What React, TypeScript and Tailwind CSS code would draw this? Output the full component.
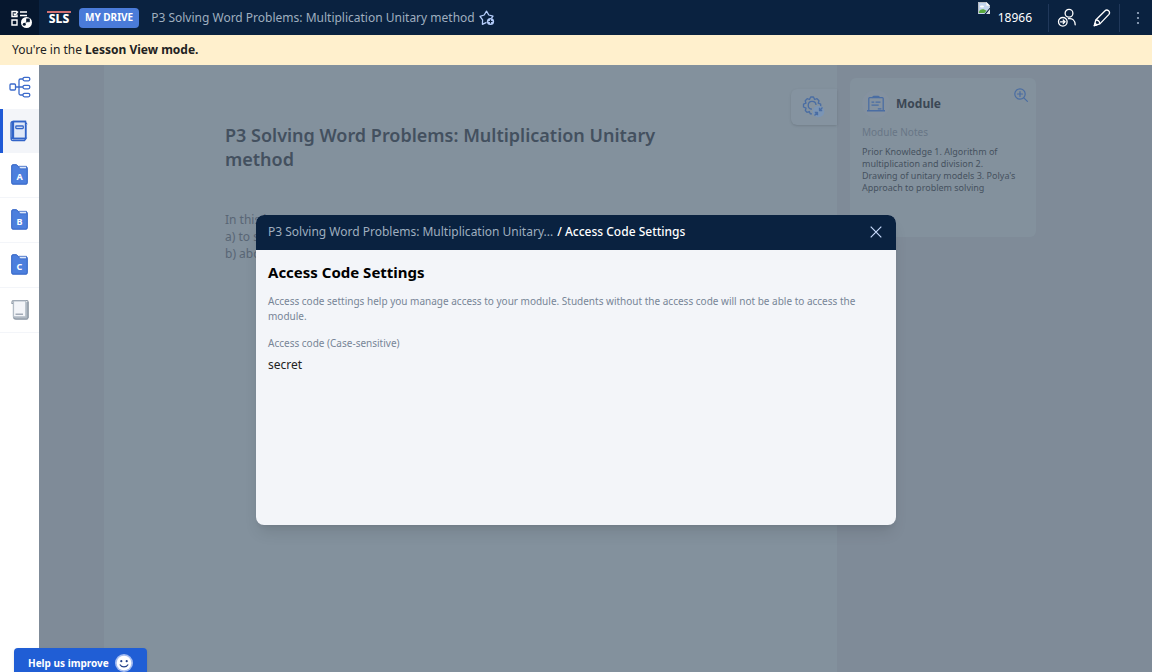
import React from "react";

function TaskIcon() {
  return (
    <svg width="22" height="20" viewBox="0 0 22 20" fill="none" stroke="#fff" strokeWidth="1.4">
      <path d="M6 1.5H1v5h5V4.5M2.7 3.6 4 5l3-3.5M9 2h7M9 5.500h7M1 10h5v5H1z" />
      <circle cx="15.500" cy="12.500" r="5.500" fill="#fff" stroke="none" />
      <circle cx="13.300" cy="14.300" r="1.500" fill="#06172e" stroke="none" />
      <path d="M15.500 8.800h3v3h-3zM14.200 13.300l2.500-2.300" fill="#06172e" stroke="#06172e" strokeWidth=".6" />
    </svg>
  );
}

function StarIcon() {
  return (
    <svg width="16" height="16" viewBox="0 0 16 16" fill="none" stroke="#b5cdfb" strokeWidth="1.3" strokeLinejoin="round">
      <path d="M7.500 12.300 3.400 14.300 3.600 9.800 1 6.300 5.200 5 7.500 1.200 9.800 5 14 6.200 12.500 8.200" />
      <circle cx="11.500" cy="11.500" r="3.600" fill="#b5cdfb" stroke="none" />
      <path d="M11.500 9.500v4M9.500 11.500h4" stroke="#0a2240" strokeWidth="1.200" />
    </svg>
  );
}

function BrokenImageIcon() {
  return (
    <svg width="12" height="12" viewBox="0 0 12 12">
      <path d="M0 0h8.500L12 3.500V5.500L6.500 12H0z" fill="#c3d5ee" />
      <path d="M.5 11.500V.5h8v3h3v2" fill="none" stroke="#b9bdc2" />
      <path d="M8.300.3v3.500h3.500z" fill="#fff" />
      <ellipse cx="4" cy="4.500" rx="2" ry="1" fill="#fff" />
      <path d="M1 11V9.500C2.500 6.500 6 6.500 8.500 8.800L6.500 11z" fill="#59a83e" />
      <path d="M12 7v5H8z" fill="#dfe4ea" />
    </svg>
  );
}

function UserSwitchIcon() {
  return (
    <svg width="20" height="20" viewBox="0 0 20 20" fill="none" stroke="#fff" strokeWidth="1.3" strokeLinecap="round">
      <circle cx="12" cy="5.300" r="3.900" />
      <path d="M11.500 10.700c4-.6 6.600 1.700 6.700 6.100" />
      <circle cx="5.800" cy="13.800" r="4.300" />
      <path d="M3.500 13.800h4.300M6.200 12l1.800 1.800-1.800 1.800" />
    </svg>
  );
}

function PencilIcon() {
  return (
    <svg width="18" height="18" viewBox="0 0 18 18" fill="none" stroke="#fff" strokeWidth="1.300" strokeLinejoin="round">
      <path d="M2.800 11 11.800 2c2.500-2.500 6.300.8 3.900 3.600L6.900 14.900 1.300 16.700z" />
      <path d="M2.800 11c2.300-.2 4 1.500 4.100 3.900M1.300 16.700l.8-2.500 1.700 1.700z" />
    </svg>
  );
}

function TreeIcon() {
  return (
    <svg width="22" height="22" viewBox="0 0 22 22" fill="none" stroke="#3c6bcb" strokeWidth="1.300">
      <rect x="1" y="8" width="5.500" height="6" rx="1" />
      <path d="M6.500 11H14M14 3h-2.500q-1.500 0-1.500 1.500v13q0 1.500 1.500 1.500H14" />
      <rect x="14" y="1.300" width="6.800" height="3.500" rx="1.500" />
      <rect x="14" y="9.300" width="6.800" height="3.500" rx="1.500" />
      <rect x="14" y="17.300" width="6.800" height="3.500" rx="1.500" />
    </svg>
  );
}

function BookIcon() {
  return (
    <svg width="18" height="22" viewBox="0 0 18 22" fill="none" stroke="#3264c8" strokeWidth="1.300">
      <path d="M3.500 1.500h12v17h-12z" fill="#e0e8f7" />
      <path d="M17 4.500 15.500 2.200V1.500H3Q1 1.500 1 3.500v14.800Q1 20.500 3 20.500h11.500l1.500-2H3.500Q1 18.500 1 17M16 5v13.500" />
      <path d="M2.500 2v16" strokeWidth="2" />
      <rect x="5.800" y="6" width="7.500" height="2.500" rx=".8" fill="#fff" />
    </svg>
  );
}

function FolderIcon({ letter }: { letter: string }) {
  return (
    <svg width="17" height="21" viewBox="0 0 17 21">
      <path d="M.7 2Q.7.7 2 .7h3.600L7.500 2.800H15q1.300 0 1.300 1.300v14.800q0 1.300-1.300 1.300H2Q.7 20.200.7 18.900z" fill="#4c7fdd" stroke="#3062c4" />
      <path d="M7.500 2.300h8v2.500H9z" fill="#dde8fb" stroke="#3062c4" strokeWidth=".7" />
      <text x="8.500" y="16" textAnchor="middle" fill="#fff" fontSize="9" fontWeight="700" fontFamily="Noto Sans, sans-serif">{letter}</text>
    </svg>
  );
}

function PageIcon() {
  return (
    <svg width="18" height="22" viewBox="0 0 18 22" fill="none" stroke="#8e99a6" strokeWidth="1.200">
      <path d="M2.500 4.500H1V3Q1 1.500 2.500 1.500h13.500q1 0 1 1v16.500" />
      <path d="M2.500 4.500v12.700q0 3 2.500 3h10.500q1.500 0 1.500-2V3" fill="#aeb7c1" />
      <path d="M2.500 2h12.300v15.800H2.500z" fill="#f3f5f9" stroke="#b4bdc7" />
      <path d="M4.500 15.200h7.500" />
    </svg>
  );
}

function GearIcon() {
  return (
    <svg width="24" height="24" viewBox="0 0 24 24" fill="none" stroke="#4a6da3" strokeWidth="1.300" strokeLinejoin="round">
      <path d="M10 18.800H8.200L7.300 16.500 5 17.300 3.300 15.500 4 13.200 1.500 12V9.200L4 8.200 3.200 5.700 5.200 3.700 7.500 4.500 8.700 2H11.500L12.600 4.500 15 3.700 17 5.700 16.200 8.200 18.700 9.200V11.500" />
      <path d="M10 14.200A3.900 3.900 0 1 1 14 10" />
      <circle cx="16.500" cy="16.500" r="5.800" fill="#7b95b5" stroke="none" />
      <path d="m20.500 12.500-3 3v-2.700m0 2.700h2.700m-7.700 5 3-3v2.700m0-2.700h-2.700" />
    </svg>
  );
}

function ModuleIcon() {
  return (
    <svg width="20" height="18" viewBox="0 0 22 20" fill="none" stroke="#4a6da3" strokeWidth="1.400">
      <path d="M6.500 3 8.500 1.500h5l2 1.500" />
      <path d="M3 17V4q0-1 1-1h14q1 0 1 1v13M1 17.500h20M6 8h3M10.500 8H16M6 11.200h8M13 15.500h4" />
    </svg>
  );
}

function ZoomIcon() {
  return (
    <svg width="14" height="14" viewBox="0 0 14 14" fill="none" stroke="#4a6da3" strokeWidth="1.200" strokeLinecap="round">
      <circle cx="6" cy="6" r="5.200" />
      <path d="m9.800 9.800 3.600 3.600M6 3.500v5M3.500 6h5" />
    </svg>
  );
}

function Smiley() {
  return (
    <svg width="18" height="18" viewBox="0 0 18 18">
      <circle cx="9" cy="9" r="9" fill="#a5bdf2" />
      <circle cx="9" cy="9" r="7.300" fill="#fff" />
      <circle cx="6.300" cy="7.200" r="1.100" fill="#24418a" />
      <circle cx="11.700" cy="7.200" r="1.100" fill="#24418a" />
      <path d="M4.800 10.500c1.800 3.200 6.600 3.200 8.400 0" fill="none" stroke="#24418a" strokeWidth="1.200" />
    </svg>
  );
}

function Header() {
  return (
    <header className="flex h-[35px] shrink-0 items-center bg-[#0a2240]">
      <button aria-label="Tasks" className="flex h-full w-[39px] items-center justify-center bg-[#06172e] pt-1 pl-1">
        <TaskIcon />
      </button>
      <a href="#" className="ml-2 flex w-6 flex-col items-center border-t-2 border-[#cf6f72] text-[12px] leading-[12px] font-extrabold text-white">
        SLS
      </a>
      <a href="#" className="ml-2 flex h-5 items-center rounded bg-[#4a7bd9] px-1.5 text-[10px] font-bold text-white">
        MY DRIVE
      </a>
      <span className="ml-3 text-[12px] whitespace-nowrap text-[#9faebf]">P3 Solving Word Problems: Multiplication Unitary method</span>
      <button aria-label="Add to favourites" className="ml-1">
        <StarIcon />
      </button>
      <div className="ml-auto flex h-full items-center">
        <span className="self-start pt-0.5">
          <BrokenImageIcon />
        </span>
        <span className="ml-2 text-[12px] text-white">18966</span>
        <div className="ml-4 flex h-7 items-center gap-4 border-x border-[#20385a] pr-2 pl-2">
          <button aria-label="Switch user">
            <UserSwitchIcon />
          </button>
          <button aria-label="Edit">
            <PencilIcon />
          </button>
        </div>
        <button aria-label="More" className="flex w-8 justify-center pl-1">
          <svg width="4" height="14" viewBox="0 0 4 14" fill="#9fb0c6">
            <circle cx="2" cy="2" r="1.100" />
            <circle cx="2" cy="7" r="1.100" />
            <circle cx="2" cy="12" r="1.100" />
          </svg>
        </button>
      </div>
    </header>
  );
}

function Sidebar() {
  return (
    <nav className="flex w-[39px] shrink-0 flex-col bg-white">
      <button aria-label="Structure" className="flex h-11 items-center justify-center">
        <TreeIcon />
      </button>
      <button aria-label="Module" className="flex h-11 items-center justify-center border-l-[3px] border-[#1f5ad6] bg-[#f3f5f9] pr-1">
        <BookIcon />
      </button>
      {["A", "B", "C"].map((letter) => (
        <button key={letter} aria-label={"Section " + letter} className="flex h-[45px] items-center justify-center border-b border-[#f3f5f9] pb-0.5">
          <FolderIcon letter={letter} />
        </button>
      ))}
      <button aria-label="Summary" className="flex h-[45px] items-center justify-center border-b border-[#f3f5f9]">
        <PageIcon />
      </button>
    </nav>
  );
}

function ModuleCard() {
  return (
    <section className="min-h-[159px] w-[186px] rounded-md bg-[#83919d] px-3 pt-2">
      <div className="flex items-start">
        <div className="flex items-center gap-1.5 pt-1">
          <span className="flex size-7 items-center justify-center rounded-full bg-[#8592a0]">
            <ModuleIcon />
          </span>
          <h2 className="text-[12px] leading-7 font-bold text-[#3b4754]">Module</h2>
        </div>
        <button aria-label="Zoom in" className="-mr-1 ml-auto pt-0.5">
          <ZoomIcon />
        </button>
      </div>
      <p className="mt-1 text-[10px] leading-5 text-[#687686]">Module Notes</p>
      <p className="mt-1 text-[9px] leading-3 text-[#46525f]">
        Prior Knowledge 1. Algorithm of multiplication and division 2.
        <br />
        Drawing of unitary models 3. Polya's Approach to problem solving
      </p>
    </section>
  );
}

function AccessCodeDialog() {
  return (
    <div role="dialog" aria-labelledby="dialog-title" className="min-h-[310px] w-full max-w-[640px] overflow-hidden rounded-lg bg-[#f3f5f9] shadow-lg">
      <div className="flex h-[35px] items-center bg-[#0a2240] px-3 text-[12px]">
        <span className="text-[#9faebf]">P3 Solving Word Problems: Multiplication Unitary...</span>
        <span className="ml-1 font-medium text-white">/ Access Code Settings</span>
        <button aria-label="Close" className="ml-auto px-0.5">
          <svg width="12" height="12" viewBox="0 0 12 12" stroke="#c6d9fa" strokeWidth="1.200">
            <path d="m.7.7 10.600 10.600M11.300.7.7 11.300" />
          </svg>
        </button>
      </div>
      <div className="px-3 pt-3">
        <h1 id="dialog-title" className="text-[15px] leading-5 font-bold text-black">Access Code Settings</h1>
        <p className="mt-3 text-[10px] leading-[15px] text-[#778597]">
          Access code settings help you manage access to your module. Students without the access code will not be able to access the module.
        </p>
        <dl className="mt-3">
          <dt className="text-[10px] leading-[15px] text-[#778597]">Access code (Case-sensitive)</dt>
          <dd className="mt-1 text-[12px] leading-5 text-[#222]">secret</dd>
        </dl>
      </div>
    </div>
  );
}

export default function App() {
  return (
    <div className="flex min-h-screen flex-col font-['Noto_Sans',sans-serif]">
      <Header />
      <div className="flex h-[30px] shrink-0 items-center bg-[#fff0cd] px-3 text-[12px] text-[#222]">
        <p>
          You're in the <strong className="font-bold">Lesson View mode.</strong>
        </p>
      </div>
      <div className="relative flex flex-1">
        <Sidebar />
        <div className="flex flex-1 bg-[#7f8b98] pl-[65px]">
          <main className="flex flex-1 items-start bg-[#83919d] pt-6">
            <article className="min-w-0 flex-1 pr-20 pl-[121px]">
              <h1 className="pt-[34px] text-[18px] leading-6 font-semibold text-[#43505f]">P3 Solving Word Problems: Multiplication Unitary method</h1>
              <p className="mt-10 text-[12px] leading-[17px] text-[#596675]">
                In this lesson
                <br />
                a) to solve
                <br />
                b) about
              </p>
            </article>
            <button aria-label="Settings" className="ml-auto flex h-9 w-[46px] items-center justify-center rounded-l-md bg-[#8593a0] shadow-sm">
              <GearIcon />
            </button>
          </main>
          <aside className="w-[315px] shrink-0 pt-[13px] pl-[13px]">
            <ModuleCard />
          </aside>
        </div>
        <div className="absolute inset-0 flex items-center justify-center pt-0.5">
          <AccessCodeDialog />
        </div>
        <button className="absolute bottom-0 left-[14px] flex h-6 items-center gap-1.5 rounded-t-sm bg-[#205ed5] px-3.5 pt-1.5 text-[10px] font-bold text-white shadow">
          Help us improve
          <Smiley />
        </button>
      </div>
    </div>
  );
}
